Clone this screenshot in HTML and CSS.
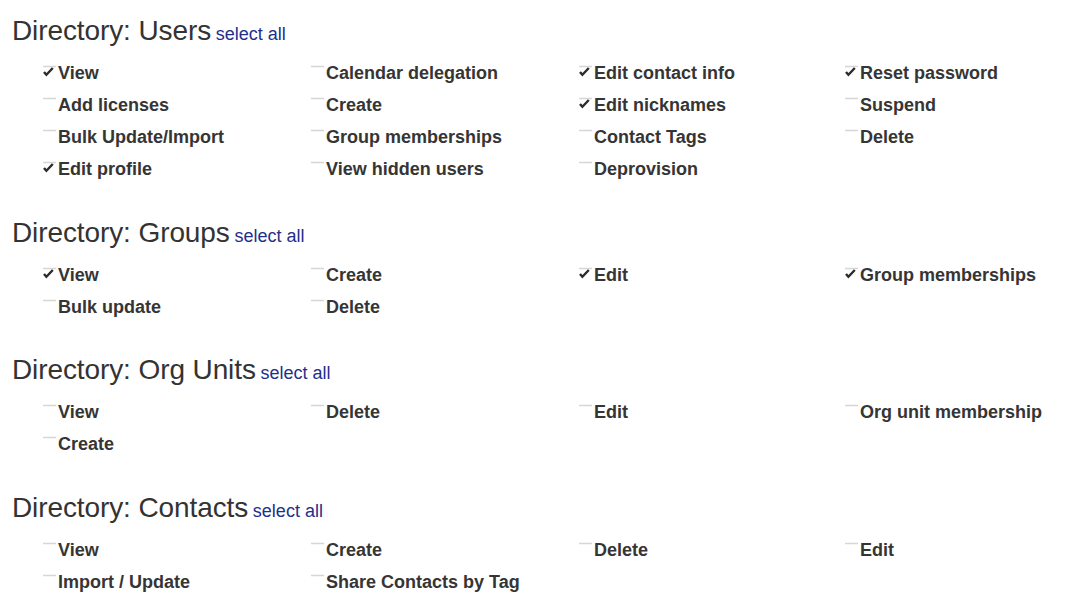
FILE: index.html
```html
<!DOCTYPE html>
<html>
<head>
<meta charset="utf-8">
<link rel="stylesheet" href="styles.css">
</head>
<body>
<div class="page">

<section class="section">
  <h2 class="heading">Directory: Users <a class="select-all" href="#">select all</a></h2>
  <div class="grid">
    <label class="item checked"><svg class="cb" viewBox="0 0 13 32" width="13" height="32"><line class="box" x1="0" y1="9.5" x2="13" y2="9.5"/><path class="tick" d="M1 15 L3.4 17.8 L9.8 11"/></svg>View</label>
    <label class="item"><svg class="cb" viewBox="0 0 13 32" width="13" height="32"><line class="box" x1="0" y1="9.5" x2="13" y2="9.5"/></svg>Calendar delegation</label>
    <label class="item checked"><svg class="cb" viewBox="0 0 13 32" width="13" height="32"><line class="box" x1="0" y1="9.5" x2="13" y2="9.5"/><path class="tick" d="M1 15 L3.4 17.8 L9.8 11"/></svg>Edit contact info</label>
    <label class="item checked"><svg class="cb" viewBox="0 0 13 32" width="13" height="32"><line class="box" x1="0" y1="9.5" x2="13" y2="9.5"/><path class="tick" d="M1 15 L3.4 17.8 L9.8 11"/></svg>Reset password</label>

    <label class="item"><svg class="cb" viewBox="0 0 13 32" width="13" height="32"><line class="box" x1="0" y1="9.5" x2="13" y2="9.5"/></svg>Add licenses</label>
    <label class="item"><svg class="cb" viewBox="0 0 13 32" width="13" height="32"><line class="box" x1="0" y1="9.5" x2="13" y2="9.5"/></svg>Create</label>
    <label class="item checked"><svg class="cb" viewBox="0 0 13 32" width="13" height="32"><line class="box" x1="0" y1="9.5" x2="13" y2="9.5"/><path class="tick" d="M1 15 L3.4 17.8 L9.8 11"/></svg>Edit nicknames</label>
    <label class="item"><svg class="cb" viewBox="0 0 13 32" width="13" height="32"><line class="box" x1="0" y1="9.5" x2="13" y2="9.5"/></svg>Suspend</label>

    <label class="item"><svg class="cb" viewBox="0 0 13 32" width="13" height="32"><line class="box" x1="0" y1="9.5" x2="13" y2="9.5"/></svg>Bulk Update/Import</label>
    <label class="item"><svg class="cb" viewBox="0 0 13 32" width="13" height="32"><line class="box" x1="0" y1="9.5" x2="13" y2="9.5"/></svg>Group memberships</label>
    <label class="item"><svg class="cb" viewBox="0 0 13 32" width="13" height="32"><line class="box" x1="0" y1="9.5" x2="13" y2="9.5"/></svg>Contact Tags</label>
    <label class="item"><svg class="cb" viewBox="0 0 13 32" width="13" height="32"><line class="box" x1="0" y1="9.5" x2="13" y2="9.5"/></svg>Delete</label>

    <label class="item checked"><svg class="cb" viewBox="0 0 13 32" width="13" height="32"><line class="box" x1="0" y1="9.5" x2="13" y2="9.5"/><path class="tick" d="M1 15 L3.4 17.8 L9.8 11"/></svg>Edit profile</label>
    <label class="item"><svg class="cb" viewBox="0 0 13 32" width="13" height="32"><line class="box" x1="0" y1="9.5" x2="13" y2="9.5"/></svg>View hidden users</label>
    <label class="item"><svg class="cb" viewBox="0 0 13 32" width="13" height="32"><line class="box" x1="0" y1="9.5" x2="13" y2="9.5"/></svg>Deprovision</label>
  </div>
</section>

<section class="section">
  <h2 class="heading">Directory: Groups <a class="select-all" href="#">select all</a></h2>
  <div class="grid">
    <label class="item checked"><svg class="cb" viewBox="0 0 13 32" width="13" height="32"><line class="box" x1="0" y1="9.5" x2="13" y2="9.5"/><path class="tick" d="M1 15 L3.4 17.8 L9.8 11"/></svg>View</label>
    <label class="item"><svg class="cb" viewBox="0 0 13 32" width="13" height="32"><line class="box" x1="0" y1="9.5" x2="13" y2="9.5"/></svg>Create</label>
    <label class="item checked"><svg class="cb" viewBox="0 0 13 32" width="13" height="32"><line class="box" x1="0" y1="9.5" x2="13" y2="9.5"/><path class="tick" d="M1 15 L3.4 17.8 L9.8 11"/></svg>Edit</label>
    <label class="item checked"><svg class="cb" viewBox="0 0 13 32" width="13" height="32"><line class="box" x1="0" y1="9.5" x2="13" y2="9.5"/><path class="tick" d="M1 15 L3.4 17.8 L9.8 11"/></svg>Group memberships</label>

    <label class="item"><svg class="cb" viewBox="0 0 13 32" width="13" height="32"><line class="box" x1="0" y1="9.5" x2="13" y2="9.5"/></svg>Bulk update</label>
    <label class="item"><svg class="cb" viewBox="0 0 13 32" width="13" height="32"><line class="box" x1="0" y1="9.5" x2="13" y2="9.5"/></svg>Delete</label>
  </div>
</section>

<section class="section">
  <h2 class="heading">Directory: Org Units <a class="select-all" href="#">select all</a></h2>
  <div class="grid">
    <label class="item"><svg class="cb" viewBox="0 0 13 32" width="13" height="32"><line class="box" x1="0" y1="9.5" x2="13" y2="9.5"/></svg>View</label>
    <label class="item"><svg class="cb" viewBox="0 0 13 32" width="13" height="32"><line class="box" x1="0" y1="9.5" x2="13" y2="9.5"/></svg>Delete</label>
    <label class="item"><svg class="cb" viewBox="0 0 13 32" width="13" height="32"><line class="box" x1="0" y1="9.5" x2="13" y2="9.5"/></svg>Edit</label>
    <label class="item"><svg class="cb" viewBox="0 0 13 32" width="13" height="32"><line class="box" x1="0" y1="9.5" x2="13" y2="9.5"/></svg>Org unit membership</label>

    <label class="item"><svg class="cb" viewBox="0 0 13 32" width="13" height="32"><line class="box" x1="0" y1="9.5" x2="13" y2="9.5"/></svg>Create</label>
  </div>
</section>

<section class="section">
  <h2 class="heading">Directory: Contacts <a class="select-all" href="#">select all</a></h2>
  <div class="grid">
    <label class="item"><svg class="cb" viewBox="0 0 13 32" width="13" height="32"><line class="box" x1="0" y1="9.5" x2="13" y2="9.5"/></svg>View</label>
    <label class="item"><svg class="cb" viewBox="0 0 13 32" width="13" height="32"><line class="box" x1="0" y1="9.5" x2="13" y2="9.5"/></svg>Create</label>
    <label class="item"><svg class="cb" viewBox="0 0 13 32" width="13" height="32"><line class="box" x1="0" y1="9.5" x2="13" y2="9.5"/></svg>Delete</label>
    <label class="item"><svg class="cb" viewBox="0 0 13 32" width="13" height="32"><line class="box" x1="0" y1="9.5" x2="13" y2="9.5"/></svg>Edit</label>

    <label class="item"><svg class="cb" viewBox="0 0 13 32" width="13" height="32"><line class="box" x1="0" y1="9.5" x2="13" y2="9.5"/></svg>Import / Update</label>
    <label class="item"><svg class="cb" viewBox="0 0 13 32" width="13" height="32"><line class="box" x1="0" y1="9.5" x2="13" y2="9.5"/></svg>Share Contacts by Tag</label>
  </div>
</section>

</div>
</body>
</html>
```

FILE: styles.css
```css
html, body {
  margin: 0;
  padding: 0;
  background: #ffffff;
}

body {
  font-family: "Liberation Sans", Arial, Helvetica, sans-serif;
  color: #333333;
  overflow: hidden;
}

.page {
  padding: 15px 0 0 12px;
}

.section {
  margin-bottom: 31.5px;
}

.heading {
  margin: 0 0 10px 0;
  font-size: 28px;
  font-weight: normal;
  line-height: 32px;
  height: 32px;
  color: #333333;
  letter-spacing: -0.1px;
}

.select-all {
  font-size: 18px;
  line-height: 1;
  color: #1f2f8c;
  text-decoration: none;
  margin-left: -3px;
  letter-spacing: 0;
}

.grid {
  margin-left: 31px;
  display: grid;
  grid-template-columns: 268px 268px 266px 1fr;
  grid-auto-rows: 32px;
}

.item {
  display: flex;
  align-items: flex-start;
  gap: 2px;
  font-size: 18px;
  font-weight: bold;
  line-height: 32px;
  color: #353535;
  white-space: nowrap;
}

.cb {
  flex: none;
  display: block;
}

.cb .box {
  stroke: #d6d6d6;
  stroke-width: 1.5;
}

.cb .tick {
  fill: none;
  stroke: #2b2b2b;
  stroke-width: 2.4;
  stroke-linecap: butt;
  stroke-linejoin: miter;
}
```
